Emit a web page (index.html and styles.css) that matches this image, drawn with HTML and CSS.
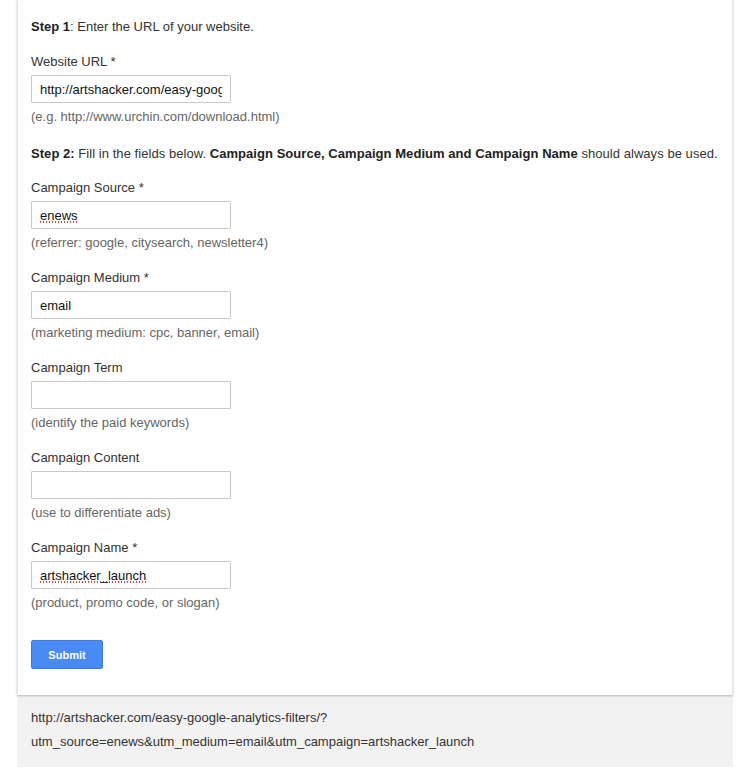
FILE: index.html
```html
<!DOCTYPE html>
<html lang="en">
<head>
    <meta charset="UTF-8">
    <meta name="viewport" content="width=device-width, initial-scale=1.0">
    <title>URL Builder</title>
    <link rel="stylesheet" href="styles.css">
</head>
<body>
    <div class="card">
        <p class="step"><strong>Step 1</strong>: Enter the URL of your website.</p>

        <div class="field">
            <label for="url">Website URL *</label>
            <input type="text" id="url" value="http://artshacker.com/easy-google-analytics-filters/">
            <div class="hint">(e.g. http://www.urchin.com/download.html)</div>
        </div>

        <p class="step step-two"><strong>Step 2:</strong> Fill in the fields below. <strong>Campaign Source, Campaign Medium and Campaign Name</strong> should always be used.</p>

        <div class="field">
            <label for="source">Campaign Source *</label>
            <input type="text" id="source" class="typo typo-short" value="enews">
            <div class="hint">(referrer: google, citysearch, newsletter4)</div>
        </div>

        <div class="field">
            <label for="medium">Campaign Medium *</label>
            <input type="text" id="medium" value="email">
            <div class="hint">(marketing medium: cpc, banner, email)</div>
        </div>

        <div class="field">
            <label for="term">Campaign Term</label>
            <input type="text" id="term">
            <div class="hint">(identify the paid keywords)</div>
        </div>

        <div class="field">
            <label for="content">Campaign Content</label>
            <input type="text" id="content">
            <div class="hint">(use to differentiate ads)</div>
        </div>

        <div class="field">
            <label for="name">Campaign Name *</label>
            <input type="text" id="name" class="typo typo-long" value="artshacker_launch">
            <div class="hint">(product, promo code, or slogan)</div>
        </div>

        <button type="button" class="submit">Submit</button>
    </div>

    <div class="result">
        <p>http://artshacker.com/easy-google-analytics-filters/?</p>
        <p>utm_source=enews&amp;utm_medium=email&amp;utm_campaign=artshacker_launch</p>
    </div>
</body>
</html>
```

FILE: styles.css
```css
body {
    font-family: "Liberation Sans", Arial, sans-serif;
    font-size: 13px;
    color: #333;
    background: #fff;
    margin: 0;
    padding: 0;
}
.card {
    width: 701px;
    margin-left: 17px;
    padding: 18px 0 26px 13px;
    background: #fff;
    border-left: 1px solid #e6e6e6;
    border-right: 1px solid #e6e6e6;
    box-shadow: 0 1px 2px rgba(0, 0, 0, 0.25);
    position: relative;
}
.step {
    margin: 0 0 17px;
    line-height: 18px;
}
.step-two {
    margin-top: 19px;
    margin-bottom: 16px;
    letter-spacing: 0.05px;
}
.step strong {
    color: #222;
}
.field {
    margin-bottom: 17px;
}
.field label {
    display: block;
    line-height: 18px;
    margin-bottom: 4px;
}
.field input {
    display: block;
    box-sizing: border-box;
    width: 200px;
    height: 28px;
    padding: 0 8px;
    border: 1px solid #c8c8c8;
    border-radius: 1px;
    font-family: "Liberation Sans", Arial, sans-serif;
    font-size: 13px;
    color: #111;
    background-color: #fff;
}
/* spell-check squiggle under unknown words */
.field input.typo {
    background-image: repeating-linear-gradient(to right, #e0443a 0 1px, transparent 1px 3px);
    background-repeat: no-repeat;
    background-position: 8px 19px;
}
.field input.typo-short {
    background-size: 37px 2px;
}
.field input.typo-long {
    background-size: 106px 2px;
}
.field .hint {
    margin-top: 5px;
    line-height: 18px;
    color: #666;
}
.submit {
    display: block;
    margin-top: 28px;
    width: 72px;
    height: 29px;
    border: 1px solid #3a7ae8;
    border-radius: 2px;
    background: #4a8af4;
    color: #fff;
    font-family: "Liberation Sans", Arial, sans-serif;
    font-size: 11px;
    font-weight: bold;
    cursor: pointer;
}
.result {
    width: 702px;
    margin-left: 17px;
    padding: 11px 0 13px 14px;
    background: #f2f2f2;
}
.result p {
    margin: 0;
    line-height: 24px;
    color: #333;
}
```
